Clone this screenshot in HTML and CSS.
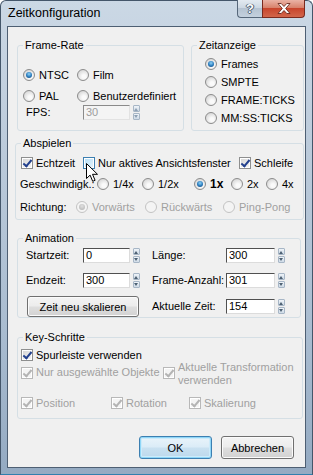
FILE: index.html
```html
<!DOCTYPE html>
<html lang="de">
<head>
  <meta charset="UTF-8" />
  <title>Zeitkonfiguration</title>
  <link rel="stylesheet" href="styles.css">
</head>
<body>
  <div class="window">
    <div class="titlebar">
      <span class="title">Zeitkonfiguration</span>
      <div class="caption-btns">
        <span class="cap help">?</span>
        <span class="cap close">
          <svg width="14" height="11" viewBox="0 0 14 11"><path d="M1 0.5h3.2l2.8 3 2.8-3h3.2l-4.3 5 4.3 5h-3.2l-2.8-3-2.8 3h-3.2l4.3-5z" fill="#fff" stroke="#5a1a10" stroke-width="0.8"/></svg>
        </span>
      </div>
    </div>

    <div class="client">
      <div class="top-row">
        <fieldset class="grp rate">
          <legend>Frame-Rate</legend>
          <div class="body">
            <div class="row">
              <label class="opt w-ntsc"><i class="rb on"></i>NTSC</label>
              <label class="opt"><i class="rb"></i>Film</label>
            </div>
            <div class="row">
              <label class="opt w-ntsc"><i class="rb"></i>PAL</label>
              <label class="opt"><i class="rb"></i>Benutzerdefiniert</label>
            </div>
            <div class="row fps">
              <span class="lbl-fps">FPS:</span>
              <span class="field off">30</span>
              <span class="spin off"><i class="up"></i><i class="dn"></i></span>
            </div>
          </div>
        </fieldset>

        <fieldset class="grp disp">
          <legend>Zeitanzeige</legend>
          <div class="body">
            <label class="opt"><i class="rb on"></i>Frames</label>
            <label class="opt"><i class="rb"></i>SMPTE</label>
            <label class="opt"><i class="rb"></i>FRAME:TICKS</label>
            <label class="opt"><i class="rb"></i>MM:SS:TICKS</label>
          </div>
        </fieldset>
      </div>

      <fieldset class="grp play">
        <legend>Abspielen</legend>
        <div class="body">
          <div class="row">
            <label class="opt cbo w-echt"><i class="cb on"></i>Echtzeit</label>
            <label class="opt cbo w-nur hover-wrap"><i class="cb hot"></i>Nur aktives Ansichtsfenster
              <svg class="cursor" width="13" height="20" viewBox="0 0 13 20"><path d="M0.5 0.5v15l3.6-3.4 2.6 6.2 2.4-1-2.6-6h5z" fill="#fff" stroke="#000" stroke-width="1" stroke-linejoin="round"/></svg>
            </label>
            <label class="opt cbo"><i class="cb on"></i>Schleife</label>
          </div>
          <div class="row speed">
            <span class="lbl-speed">Geschwindigk.:</span>
            <label class="opt w-q"><i class="rb"></i>1/4x</label>
            <label class="opt w-h"><i class="rb"></i>1/2x</label>
            <label class="opt w-1"><i class="rb on"></i><b>1x</b></label>
            <label class="opt w-2"><i class="rb"></i>2x</label>
            <label class="opt"><i class="rb"></i>4x</label>
          </div>
          <div class="row dir">
            <span class="lbl-dir">Richtung:</span>
            <label class="opt dis w-vor"><i class="rb on"></i>Vorwärts</label>
            <label class="opt dis w-rue"><i class="rb"></i>Rückwärts</label>
            <label class="opt dis"><i class="rb"></i>Ping-Pong</label>
          </div>
        </div>
      </fieldset>

      <fieldset class="grp anim">
        <legend>Animation</legend>
        <div class="body">
          <div class="arow">
            <span class="lbl-a">Startzeit:</span>
            <span class="field">0</span>
            <span class="spin"><i class="up"></i><i class="dn"></i></span>
            <span class="lbl-b">Länge:</span>
            <span class="field wide">300</span>
            <span class="spin"><i class="up"></i><i class="dn"></i></span>
          </div>
          <div class="arow">
            <span class="lbl-a">Endzeit:</span>
            <span class="field">300</span>
            <span class="spin"><i class="up"></i><i class="dn"></i></span>
            <span class="lbl-b">Frame-Anzahl:</span>
            <span class="field wide">301</span>
            <span class="spin"><i class="up"></i><i class="dn"></i></span>
          </div>
          <div class="arow last">
            <button class="btn rescale">Zeit neu skalieren</button>
            <span class="lbl-b after-btn">Aktuelle Zeit:</span>
            <span class="field wide">154</span>
            <span class="spin"><i class="up"></i><i class="dn"></i></span>
          </div>
        </div>
      </fieldset>

      <fieldset class="grp keys">
        <legend>Key-Schritte</legend>
        <div class="body">
          <div class="krow first">
            <label class="opt cbo"><i class="cb on"></i>Spurleiste verwenden</label>
          </div>
          <div class="krow two">
            <label class="opt cbo dis w-sel"><i class="cb on"></i>Nur ausgewählte Objekte</label>
            <label class="opt cbo dis multi"><i class="cb on"></i><span>Aktuelle Transformation<br>verwenden</span></label>
          </div>
          <div class="krow three">
            <label class="opt cbo dis w-pos"><i class="cb on"></i>Position</label>
            <label class="opt cbo dis w-rot"><i class="cb on"></i>Rotation</label>
            <label class="opt cbo dis"><i class="cb on"></i>Skalierung</label>
          </div>
        </div>
      </fieldset>

      <div class="actions">
        <button class="btn default">OK</button>
        <button class="btn">Abbrechen</button>
      </div>
    </div>
  </div>
</body>
</html>
```

FILE: styles.css
```css
body {
  margin: 0;
  font-family: 'Liberation Sans', Arial, sans-serif;
  font-size: 11px;
  line-height: 13px;
  color: #000;
  background: #fff;
}
.window {
  width: 313px;
  height: 475px;
  box-sizing: border-box;
  border: 1px solid #44566a;
  border-bottom-color: #2f7fae;
  border-radius: 6px 6px 0 0;
  background: linear-gradient(#cbd8e5, #bccbdb 30%, #a9bcd0 70%, #94aac2);
  padding: 0 6px 6px;
  display: flex;
  flex-direction: column;
}
.titlebar {
  height: 25px;
  display: flex;
  align-items: flex-start;
}
.title {
  font-size: 12.5px;
  line-height: 15px;
  padding-top: 5px;
  margin-left: 1px;
}
.caption-btns {
  margin-left: auto;
  margin-right: 1px;
  margin-top: -1px;
  display: flex;
}
.cap {
  height: 18px;
  box-sizing: border-box;
  border: 1px solid #56677a;
  border-top: none;
  display: flex;
  align-items: center;
  justify-content: center;
}
.help {
  width: 25px;
  border-radius: 0 0 0 4px;
  border-right: none;
  background: linear-gradient(#e3eaf1, #cdd8e3 45%, #b5c3d2 50%, #c4d1de);
  color: #fff;
  font-weight: bold;
  font-size: 13px;
  text-shadow: 0 0 1px #3a4a5c, 1px 0 0 #55657a, -1px 0 0 #55657a, 0 1px 0 #55657a;
}
.close {
  width: 43px;
  border-radius: 0 0 4px 0;
  border-color: #7a2a1e;
  background: linear-gradient(#eab3a5, #d8826c 45%, #c8452c 50%, #d2664b);
}
.client {
  flex: 1;
  background: #f0f0f0;
  border: 1px solid #4e5f73;
  padding: 11px 1px 0 9px;
}

/* group boxes */
.grp {
  margin: 0;
  padding: 0;
  border: 1px solid #d5dfe5;
  border-radius: 3px;
  box-sizing: border-box;
  min-width: 0;
}
.grp legend {
  padding: 0 2px;
  margin-left: 5px;
  line-height: 14px;
}
.top-row {
  display: flex;
  gap: 7px;
}
.rate {
  width: 167px;
  height: 93px;
}
.disp {
  width: 113px;
  height: 93px;
}
.opt {
  display: flex;
  align-items: center;
  gap: 4px;
  white-space: nowrap;
}
.opt.cbo {
  gap: 3px;
}
.opt.dis {
  color: #a0a0a0;
}
.row {
  display: flex;
  align-items: center;
  height: 16px;
}

.rate .body {
  padding: 15px 0 0 5px;
}
.rate .row + .row {
  margin-top: 5px;
}
.rate .row.fps {
  margin-top: 0;
}
.w-ntsc {
  width: 54px;
}
.lbl-fps {
  width: 57px;
  margin-left: 3px;
}
.disp .body {
  padding: 3px 0 0 13px;
}
.disp .opt {
  height: 18px;
}

.play {
  height: 84px;
  margin: 5px 0 0 -2px;
}
.play .body {
  padding: 5px 0 0 5px;
}
.play .speed {
  margin-top: 5px;
}
.play .dir {
  margin-top: 7px;
}
.w-echt { width: 62px; }
.w-nur { width: 156px; }
.lbl-speed {
  width: 77px;
  margin-left: -1px;
}
.lbl-dir {
  width: 56px;
  margin-left: -1px;
}
.w-q { width: 45px; }
.w-h { width: 52px; }
.w-1 { width: 37px; }
.w-2 { width: 35px; }
.w-vor { width: 69px; }
.w-rue { width: 78px; }
.speed b {
  font-size: 12px;
}
.hover-wrap {
  position: relative;
}
.cursor {
  position: absolute;
  left: 3px;
  top: 6px;
}

/* radio buttons */
.rb {
  width: 12px;
  height: 12px;
  box-sizing: border-box;
  border-radius: 50%;
  border: 1px solid #8c8c8c;
  background: radial-gradient(circle at 60% 65%, #fafafa 20%, #dcdcdc 70%, #c9c9c9);
  flex: none;
  position: relative;
}
.rb.on::after {
  content: '';
  position: absolute;
  left: 2px;
  top: 2px;
  width: 6px;
  height: 6px;
  border-radius: 50%;
  background: radial-gradient(circle at 50% 35%, #8fd3f7, #2a7bbd 55%, #123f69);
}
.dis .rb {
  border-color: #c3c3c3;
  background: #f4f4f4;
}
.dis .rb.on::after {
  background: radial-gradient(circle at 50% 35%, #e0e0e0, #b0b0b0);
}

/* check boxes */
.cb {
  width: 12px;
  height: 12px;
  box-sizing: border-box;
  border: 1px solid #8e8f8f;
  background: linear-gradient(135deg, #d4d4d4, #f6f6f6);
  box-shadow: inset 0 0 0 1px #fff;
  flex: none;
  position: relative;
}
.cb.on::after {
  content: '';
  position: absolute;
  left: 3px;
  top: 0;
  width: 3px;
  height: 7px;
  border: solid #22408e;
  border-width: 0 2px 2px 0;
  transform: rotate(40deg);
}
.cb.hot {
  border-color: #3c7fb1;
  background: linear-gradient(135deg, #b2dcf5, #e6f5fd);
}
.dis .cb {
  border-color: #b8b8b8;
  background: #f4f4f4;
}
.dis .cb.on::after {
  border-color: #b4b4b4;
}

/* edit fields */
.field {
  width: 47px;
  height: 15px;
  box-sizing: border-box;
  border: 1px solid;
  border-color: #505050 #dcdcdc #dcdcdc #505050;
  background: #fff;
  padding-left: 2px;
  line-height: 13px;
  flex: none;
}
.field.wide {
  width: 49px;
}
.field.off {
  background: #f4f4f4;
  color: #9c9c9c;
  border-color: #8a8a8a #e2e2e2 #e2e2e2 #8a8a8a;
}
.spin {
  width: 7px;
  height: 15px;
  margin-left: 3px;
  display: flex;
  flex-direction: column;
  gap: 1px;
  flex: none;
}
.spin i {
  flex: 1;
  border: 1px solid #a7b6c6;
  border-radius: 1px;
  background: linear-gradient(#eef3f8, #cfdbe7);
  position: relative;
}
.spin i::after {
  content: '';
  position: absolute;
  left: 0;
  border-left: 2.5px solid transparent;
  border-right: 2.5px solid transparent;
}
.spin .up::after {
  top: 2px;
  border-bottom: 3px solid #4d6073;
}
.spin .dn::after {
  top: 1px;
  border-top: 3px solid #4d6073;
}
.spin.off i::after {
  border-bottom-color: #8fa1b4;
  border-top-color: #8fa1b4;
}

.anim {
  height: 87px;
  margin: 11px 3px 0 0;
}
.anim .body {
  padding: 3px 0 0 8px;
}
.arow {
  display: flex;
  align-items: center;
  height: 15px;
}
.arow + .arow {
  margin-top: 10px;
}
.arow.last {
  height: 21px;
  margin-top: 8px;
}
.lbl-a {
  width: 57px;
}
.lbl-b {
  width: 74px;
  margin-left: 12px;
}
.lbl-b.after-btn {
  margin-left: 13px;
}

.btn {
  font-family: inherit;
  font-size: 11px;
  color: #000;
  padding: 0;
  border: 1px solid #707070;
  border-radius: 3px;
  background: linear-gradient(#f4f4f4, #ececec 48%, #dedede 52%, #d2d2d2);
  box-shadow: inset 0 0 0 1px #fbfbfb;
}
.rescale {
  width: 112px;
  height: 21px;
  margin-left: 1px;
}

.keys {
  height: 89px;
  margin: 12px 1px 0 0;
}
.keys .body {
  padding: 5px 0 0 3px;
}
.krow {
  display: flex;
}
.krow.first {
  height: 12px;
  align-items: center;
}
.krow.two {
  align-items: flex-start;
  height: 26px;
}
.krow.two .w-sel {
  width: 142px;
  margin-top: 5px;
}
.multi {
  align-items: flex-start;
  gap: 4px;
}
.multi .cb {
  margin-top: 6px;
}
.krow.three {
  height: 12px;
  align-items: center;
  margin-top: 10px;
}
.w-pos { width: 90px; }
.w-rot { width: 78px; }

.actions {
  display: flex;
  justify-content: flex-end;
  gap: 9px;
  margin: 17px 10px 0 0;
}
.actions .btn {
  width: 73px;
  height: 23px;
}
.btn.default {
  border-color: #3c7fb1;
  background: linear-gradient(#e9f4fb, #dbecf7 48%, #c9e1f1 52%, #bcd8ec);
  box-shadow: inset 0 0 0 1px #8fd6f7, inset 0 0 0 2px #cdebfa;
}
```
